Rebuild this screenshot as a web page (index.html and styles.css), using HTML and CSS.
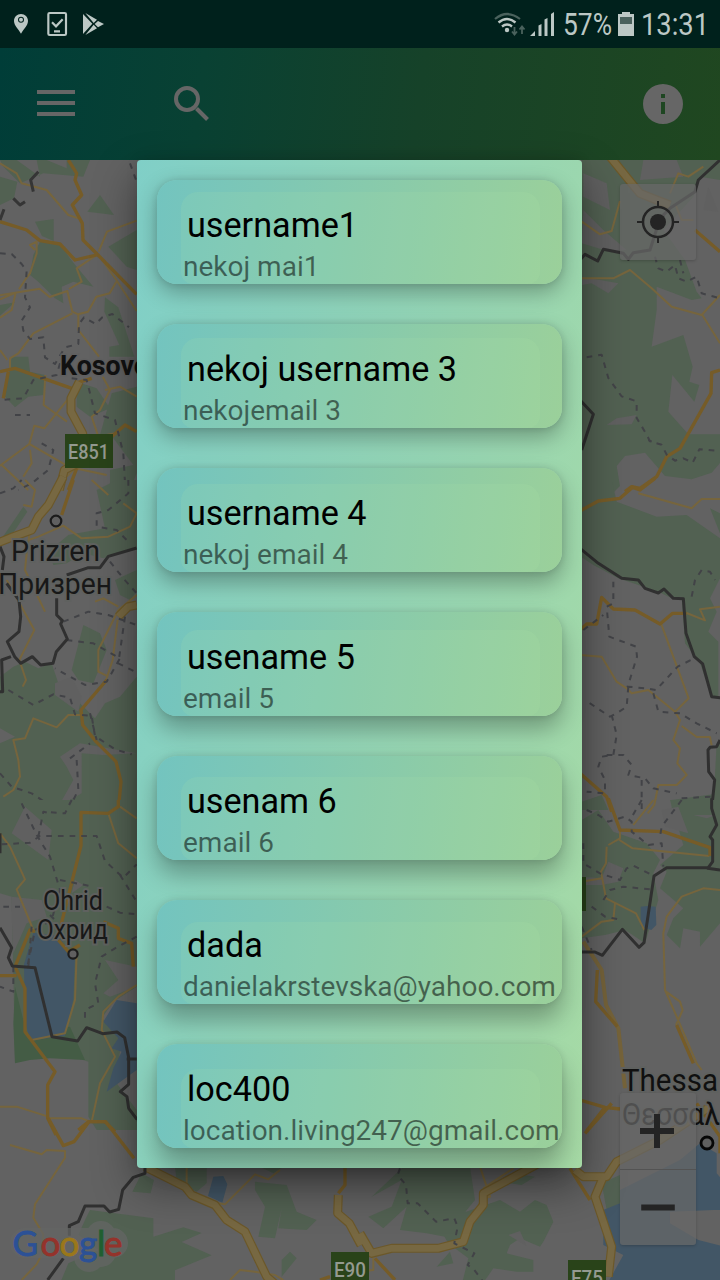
FILE: index.html
```html
<!DOCTYPE html>
<html lang="en">
<head>
<meta charset="utf-8">
<title>Users</title>
<link rel="stylesheet" href="styles.css">
</head>
<body>
<div class="screen">
  <header class="status">
    <svg class="status-icons" viewBox="0 0 1080 144" width="360" height="48">
      <path class="lit" fill-rule="evenodd" d="M63 42c-12 0-21 9-21 21 0 13 13 24 21 38 8-14 21-25 21-38 0-12-9-21-21-21zm0 8a9 9 0 1 1 0 18 9 9 0 0 1 0-18zm0 3a6 6 0 1 0 0 12 6 6 0 0 0 0-12z"/>
      <rect x="145" y="39" width="53" height="66" rx="4" fill="none" class="lit-line"/>
      <path class="lit-line" fill="none" d="M156 67l12 12 20-21M162 94h18"/>
      <path class="lit" d="M249 42l28 29-28 31zM256 39l35 20-10 10zM256 105l35-20-10-11zM294 63l18 9-18 10-10-10z"/>
    </svg>
    <svg class="status-info" viewBox="360 0 360 48" width="360" height="48">
      <path class="dim-line" d="M495 19q12-10 25 0"/>
      <path class="lit-arc" d="M498.500 22.500q8.500-7 17 0M502 26.500q5-4 10 0"/>
      <circle class="lit" cx="507" cy="30" r="2.200"/>
      <path class="dim-line thin" d="M514.500 27v7M512 31.500l2.500 3 2.500-3M522 34v-7M519.500 29.500l2.500-3 2.500 3"/>
      <path class="lit" d="M530 36l5-5v5zM538.500 25.500l3-1.500v12h-3zM544.500 19.500l3-1.500v18h-3zM551 14l3-2v24h-3z"/>
      <text class="clock" x="563" y="35" textLength="49" lengthAdjust="spacingAndGlyphs">57%</text>
      <path class="lit" d="M622 12h8v2h4v22h-16V14h4z"/>
      <path class="cell" d="M620 17h12v7h-12z"/>
      <text class="clock" x="641" y="35" textLength="68" lengthAdjust="spacingAndGlyphs">13:31</text>
    </svg>
  </header>

  <nav class="bar">
    <svg class="menu" viewBox="0 0 38 26" width="38" height="26"><path d="M0 0h38v4H0zM0 11h38v4H0zM0 22h38v4H0z"/></svg>
    <svg class="search" viewBox="0 0 36 36" width="36" height="36"><circle cx="13" cy="13" r="11"/><path d="M22.500 22.500l11 11"/></svg>
    <svg class="info" viewBox="0 0 40 40" width="40" height="40"><path fill-rule="evenodd" d="M20 0a20 20 0 1 0 0 40 20 20 0 0 0 0-40zm-2 10h4v4h-4zm0 8h4v12h-4z"/></svg>
  </nav>

  <main class="map">
    <svg class="tiles" viewBox="0 160 720 1120" width="720" height="1120">
      <g transform="translate(0 160) scale(.33333)">
        <path class="park" d="M0 0h50l70 50-10-50h30l60 25v-25h70l-20 50-120-10-70 30-50-50zM0 50l52 15-10 50-42 20zM300 105l42 60-80-10zM105 185l56-8v66l-35-15zM120 245l60 5 30 45 20 25 50 60-60-15-35 15 5 50-25-15-50-50-25-20 10-60zM325 260l85-50v120l-30-10zM0 435l45-8-45 40zM315 412l40 30 48 148h-75v-30l30-5-45-100zM35 590h50l5 45 45 10-5 60-45 5-40 32-30-32zM230 665l60 20 40 60-60 25-40-30zM335 700l75-20v260l-20 50h-60V930l70-15-60-80-40-10z"/>
        <path class="minor" d="M0 10l50 30 15 30 75 20 65 75 30 10M296 275l25-60 89-33M296 285l53 75 61 93M349 365l-20 35-40 10-25 45-30 8-17-8-15-62-53 18-30-25-120 20M0 418l47-20-12 52-35 23M217 460l-117 60-45 60-25 15v35M235 460v50l62 80M22 600L0 570M105 270l-15-15 20-10v35l-20 60-15 20-18 28M290 285l-60 40 15 40-38 22M136 645l-5 90 70 50M218 700l-85 105-30-8-15 55-88 65M5 915l80 75M85 850l130 75M90 870l5 40-25 40M308 650l22 40-30 60-25 20 20 60 50-10M315 690l45-10 50 30M200 950l25-25 95 20"/>
        <path class="road" d="M205 0l25 40-5 20 20 45-28 30 30 55 2 50 45 45 116 118M0 185l80 25 40 32 60 10 45 48 65-15M0 635l45-10 170 60M25 635l-15 80M335 830l40-35 35 20M230 925l-25 65M275 655l-50 15"/>
        <path class="highway-edge" d="M238 665l-25 50v40l35 65 5 80-60 30-15 60"/><path class="highway" d="M238 665l-25 50v40l35 65 5 80-60 30-15 60"/>
        <path class="dash" d="M0 280l35 2 30 30 15 20-5 80 15 30-25 40 5 30 20 25 40-5 5 60 30 20 30-50 40-10 2-60 15-20 35 20 20-20 30-10 50 40M180 610l-10 35-70 15-30 55-70 5M215 655l45 5 10 40 15 60 60 20 25 100 5 90M45 765h45M125 850l35 20-15 60-50 40-40 20M390 10l20 55"/>
        <path class="limit" d="M115 35l-23 25 8 35M40 115l20 20 15-10M12 148L0 180"/>
      </g>
      <g transform="translate(0 480) scale(.33333)">
        <path class="park" d="M290 30l60-30h60v200l-100 35-60-15-50 30-40 5-15-40 60-50 110-20zM70 80l12 15-50 75-30 10zM250 435l50 25 20 50-40 100-45-10-20-30zM345 300l65-30v65l-20 25-30-15zM0 590l40-30 35-15 40 20 40-15 20 60-5 35 60 15 55 55 30-45 45-20 50-60v410H0V790l45-20-45-25z"/>
        <path class="bare" d="M165 610l50-20 30 60-10 45-70-50zM180 830l60-40 170 30-100 5-65-5v120l-70 40 45-80-20-40z"/>
        <path class="minor" d="M85 180l30-10 75-33 55 38 80-5 65-30 20-40-40-30M90 150l-10 70-5 50 60 125M20 300l83 150-45 90 20 60-10 20M325 590l-30-15v-65l60-120 55-45M353 420l-15 120-20 60M285 365l25-10 45 25M250 705h-45l-35 37-70-27-25 60-35 5 15 60 5 50-20 40-30 20M275 0l50 45M75 0l30 30-10 50-25-5"/>
        <path class="road" d="M220 0l-35 105M320 600l-77 90 5 45 40 50 60 60 15 60-8 85"/>
        <path class="highway-edge" d="M190-10l-45 85-30 35-20 40-55 20-50 20M410 375l-25 5-30 30"/><path class="highway" d="M190-10l-45 85-30 35-20 40-55 20-50 20M410 375l-25 5-30 30"/>
        <path class="dash" d="M385 0v40l-60 50-35 10v40l60 10 35 35M330 245l40 50 40 45M190 425l75-30 60 10 85 30M375 410l-20 140 50 25M200 480l80 10 80 45-40 70-65 10-90-50M25 630l75 45 60-32 50 10 15 50 50 5 10 60 60 40 50 15M210 835l60-45M230 840l5 90-30 60M0 880l35 40 60 20 45 30M0 40l40-15 25-25M270 700l20 80"/>
        <path class="border" d="M410 204l-85 25-25 34h-35l-65 22M0 200l12 30-5 40M20 310l37 50 5 50-5 45-35 30 22 45 18 20 35-20 25 25 37-5 10-35 33-38-20-45 5-10-17-17v-50M33 530l-28 10 3 95H-5"/>
      </g>
      <g transform="translate(0 800) scale(.33333)">
        <path class="park" d="M0 0h410v560l-70 45-35 50 60 45-15 150 60 80v60H290l-25-40v-165l-90-30-130 30-5-260L35 290 0 280z"/>
        <path class="forest" d="M45 560l35 140 130-20 45 100-105-5-60 5-45 10-5-120z"/>
        <path class="bare" d="M75 20l80 70-10 90-110-80zM35 290l90 10 15 50-60 20-40 90-5-110zM225 240l25 15-35 25zM315 480l95 20v60l-80 30-20-10 45-40z"/>
        <path class="water" d="M100 398l80 10 30 60h15l-5 130-25 110-45 5-60 10-15-60-3-170zM350 600l60 10v200l-90 65 20-70 25-50-30-10 20-30-45-50z"/>
        <path class="minor" d="M0 100l30 40 45 98-25 30 50 122M325 40l30 90 55 45M410 555l-55 35-45 45-5 55 40 80-45 80-25 115M230 460l-5 140-30 100-100 20M145 955h100l25 10M0 920h50l95 30M360 20l50 35"/>
        <path class="road" d="M355 0v20l-30 20-82-3v100l-58 230 5 20M310 365l45 20v30l40 15 5 70M105 395l-15-5-45 110 30 65v130l90 120-22 40v100l25 50M0 527h50M235 990l30-25h50l30 30M175 420l30 35 35-20"/>
        <path class="dash" d="M65 10l45 95 40 65 30 100-25 90-50 30-25 120M5 133l85-5 30-20h170l25 75 55 50 40-40M215 0l-20 40-60-5M320 320l40 18 50 5M360 225l50 80M410 410l-65 35-40 25-20 80 10 60-40 20v40M10 320h50M150 345l20 20M40 500v75l-40-15M85 500l10-120M180 240l100 20M115 110l15-75 20 5"/>
        <path class="border" d="M0 100v60M0 383l35 60-10 30 12 25 68 5 51 207 77 13 27-40 48 18 43-5 23 17 12 60v80l-25 22 20 15 5 35 30 40M380 777h30"/>
      </g>
      <g transform="translate(0 1120) scale(.33333)">
        <path class="park" d="M270 270l190 25v55l90-28 55 17-60 27 90 40-110 45v39H180l25-60 90-40-60-45 20-45zM425 160l37 20-10 40-55-5zM525 140h95v50l-30 25-60-30zM370 0h40v30zM765 185l95 10 30 80 60 25-30 30-85-5 10-60-20 90-50-5 20-90-30-50zM870 395l20 20-45 55v-50zM780 140h70l-30 20zM1210 140h200l15 100-90 110-55-10-80-10 20-70-70 65-45-35 70-30 30-80-90 50zM1500 240l60 35 45-35 35 15 20 50-30 60-10 15-60-25-30 20-10 25 80 20v35l-50 0-70-10-35 50h-60l20-80-60-45-15-25 40-60z"/>
        <path class="park" d="M1310 440l40-45 10 35zM1505 180l40-20 60 10-40 25-65-10zM1805 190l55-25v85l-40 20z"/>
        <path class="bare" d="M1525 345l35-12 20 45z"/>
        <path class="water" d="M640 170l30-2 12 25-15 55-43-20zM1810 270l50-20v-40l180-90 60-50 50 30v60l50 60-30 50h-30l-130 5v35l85 50 80 20v-5l0 120H1820l50-90-60-30z"/>
        <path class="minor" d="M30 75l95 28 15-13 55 3v20l-90 140-5 40 30 50-5 60-15 30-45 47M840 150l-35 28-40-15-90 90-30-5M560 140v50M690 480l30-30 45 5 60 10 25 15M1440 140l30 90-25 5-45 110-20 20M1540 145l-90 60M1120 400v50l-45 5v30"/>
        <path class="road" d="M145-5l45 82 32-12 45-60h50l85 110M1035 145v50l-20 25M1125 415l60 65M1710 145l60 95M1755 40l80-90M960 480l30-10M2090-50l70 100 0 50"/>
        <path class="highway-edge" d="M435 140l120 60 20 25 70 30 35 45 55 35 65 135 35 30M1015 225l-2 55 35 30 35 65M1080 340l35 60 60-15h140l75-20 20-60 40-50v-35l185-100M1725 150l25 20h70l30-45 130-65 150-100M1810 170l-25 60 50 150-10 90"/><path class="highway" d="M435 140l120 60 20 25 70 30 35 45 55 35 65 135 35 30M1015 225l-2 55 35 30 35 65M1080 340l35 60 60-15h140l75-20 20-60 40-50v-35l185-100M1725 150l25 20h70l30-45 130-65 150-100M1810 170l-25 60 50 150-10 90"/>
        <path class="dash" d="M1200 145l-7 20 25 30 5 55h30l55 55 55-10 10 25-10 50 60 30-20 35 20 15 30 40"/>
        <path class="border" d="M435 140v20l-35 12-32 38-12 58-27 8-17-18h-57l-20 47-27 12v30M190 415l-47 65"/>
      </g>
      <g transform="translate(580 160) scale(.33333)">
        <path class="park" d="M5 0h415v60l-60-10-20 60-90 100 65 90 35 95 15 20-30 5-105-40v70l-15 110 95-35 28 95-10 45 30 10-15 50-66-80-12 110 60 68h100v80l-30 35-60 20-80-10-60-70-60 10-25 30 10 60-110 110L5 720z"/>
        <path class="bare" d="M10 40l70 30 10 80-80-40zM190 0h100l20 50-130 10zM5 350l110 20-30 30-50-30-30 5zM80 795l30-20 60-10-15 28zM10 150l60 60 70 60-50 5L5 250zM385 80l30 75-45-5z"/>
        <path class="minor" d="M0 355h100l50-25 65 55 60 55 90 25 55-60M367 465l53 85M5 185l55 38 35-10 25-90M270 100l25-60 30 10 45-30M285 130l20 50h35"/>
        <path class="road" d="M345 210l75 65M420 630l-25 8-2 62-93 165-40 25-30 60-50 35-25-5-20 15"/>
        <path class="highway-edge" d="M90-10l65 80 25 30 50 20 40 15"/><path class="highway" d="M90-10l65 80 25 30 50 20 40 15"/>
        <path class="dash" d="M225 290l10 35 25 10 25-20 10 40 25 10 30-15 15 50 55 15M300 300l10 40M20 592l45-8 20 70 40 55 45 15v50l30 50 10 20 35 10 15 30 25 18 25-7 28 13 20-40 60 5M205 840l10 5"/>
        <path class="border" d="M420 0l-65 60-10 35-75 50-30 30-30 95-50 8-15 20-15-18-60-12-17 35-38-20-15 17M0 720l40 43-35 107"/>
      </g>
      <g transform="translate(580 480) scale(.33333)">
        <path class="park" d="M5 0h90l15 65 120 45 90-5 100 70v120l-30 60 20 40-25 60 30 30v170l-20-5-35-100-45-60-10-140-30 5-40-20-120-40-75-40-60-40-35-30zM390 85l30 15v60zM275 960l145-20v50H275zM410 790l10-5v205l-20-10zM5 965l60-20 20 45H5z"/>
        <path class="minor" d="M175 40l160 45 30-28h55M0 525l65 5 45 75 30 20 15 15 50-10 80 65 15 25-20 60 20 25-8 45 28 35-30 30h-55l-12 60-20 25M243 430l83 225-40 40M305 738l45 33h40l5 25M420 380l-60 8 15 33-55-22"/>
        <path class="road" d="M0 93l55-30 65-8 38-33 22 8 45-35M0 450l20-18h30l15-80 35 35 65 3 75 42 38-32h42M0 880l80 70 15 45"/>
        <path class="dash" d="M100 305v65l-20 10 8 90 80 30 3 30-28 90 55 5 30 5 65-70 50-25M145 620l-5 60-30 20-20 10-75-50M95 705l15 60-10 60-35 5-10 30 20 40v40l-55-5M80 825h50l25 30-10 30 50 10 25 30 70 15M185 900v90M220 640l15 55 65 5 50 30 60 30M300 985v-30l95-5M10 450l60-45M335 350l10-50 20-30 25 5 15 25"/>
        <path class="border" d="M0 205l55 45 70 45 50 5 20 25 40 14 17-12 28 28 30 1 8 104 25 70 25 22 27 98 35 5M420 780l-10 20-20 2-6 8 2 65 18 25-10 95"/>
      </g>
      <g transform="translate(580 800) scale(.33333)">
        <path class="park" d="M5 60l50-30 45 65 100 35 40 50-20 40 15 80-40 130-60-40-60 15-70 10zM270 0h150v370l-60 70v-45l-50-10-10 60-40-40 20-50 30-30-70-60 20-50-20-20 70-60z"/>
        <path class="bare" d="M5 230l60 5 20-50 45 20-15 40-50 10H5zM340 45h70l-30 10zM245 30l50-10 30 80-70-20z"/>
        <path class="water" d="M182 320l20-2 25 2 2 55-15 15-32-10z"/>
        <path class="minor" d="M220 0l-60 75M118 120l40 25 230 23M85 135l35-20v-30M80 140l-2 50-15 25 15 80 90 45 25 50M5 245l60-10M105 310l-5 50-35 5-60 45M420 270l-50-5-65 25-45 60-10 50 5 170 35 80 60 140 15 20M258 575l42 30 8 25-20 45"/>
        <path class="road" d="M85-5l35 95 130 5 140 48v25M0 900l75 22 45 5M75 922l-55 70"/>
        <path class="gold" d="M10 425l55 85 13 105 37 70 20 180"/>
        <path class="road" d="M52 510l-5 95 65 75M290 675l50 115"/>
        <path class="dash" d="M20 30l35 15 30 20 50-15 20 15v30l50 40 40-5 5 70M185 0l-35 60M305 0l-60 80-5 30M10 130v60l50 30 60 20 20-35 20-8 50 25M70 300l20-30 40-10 80 8M35 320l40 30 50 10M5 380l30 70"/>
        <path class="border" d="M395-5v30l15 50-20 35 8 10v65l-15 20 37 5M383 203H260l-38 25-30 200-15 14-50-54-60 78-22-10H0"/>
      </g>
      <rect class="shield" x="65" y="434" width="48" height="34"/><rect class="shield" x="331" y="1252" width="38" height="28"/><rect class="shield" x="568" y="1260" width="38" height="20"/><rect class="shield" x="560" y="877" width="26" height="34"/>
      <text class="code" x="68" y="459" textLength="41" lengthAdjust="spacingAndGlyphs">E851</text>
      <text class="code" x="334" y="1277" textLength="32" lengthAdjust="spacingAndGlyphs">E90</text>
      <text class="code" x="571" y="1285" textLength="32" lengthAdjust="spacingAndGlyphs">E75</text>
      <text class="country" x="60" y="375" textLength="89" lengthAdjust="spacingAndGlyphs">Kosovo</text>
      <g class="city">
        <text x="11" y="561" textLength="89" lengthAdjust="spacingAndGlyphs">Prizren</text>
        <text x="-2" y="594" textLength="114" lengthAdjust="spacingAndGlyphs">Призрен</text>
        <text class="small" x="43" y="910" textLength="60" lengthAdjust="spacingAndGlyphs">Ohrid</text>
        <text class="small" x="37" y="939" textLength="71" lengthAdjust="spacingAndGlyphs">Охрид</text>
        <text class="large" x="622" y="1091" textLength="96" lengthAdjust="spacingAndGlyphs">Thessa</text>
        <text class="large" x="622" y="1125" textLength="98" lengthAdjust="spacingAndGlyphs">Θεσσαλ</text>
      </g>
      <circle class="dot" cx="56" cy="521" r="5.300"/><circle class="dot" cx="73" cy="954" r="4.600"/><circle class="dot strong" cx="707" cy="1143" r="6"/>
      <path class="halo" d="M25 1243h88M89 1251v6M101 1236v16"/>
      <text class="google" y="1256"><tspan class="g-blue" x="12.500">G</tspan><tspan class="g-red" x="40.500">o</tspan><tspan class="g-yellow" x="59.500">o</tspan><tspan class="g-blue" x="79">g</tspan><tspan class="g-green" x="97">l</tspan><tspan class="g-red" x="104">e</tspan></text>
    </svg>
    <div class="controls">
      <div class="control locate"><svg viewBox="0 0 42 42" width="42" height="42"><circle class="ring" cx="21" cy="21" r="15"/><circle cx="21" cy="21" r="8"/><path d="M20 0h2v7h-2zM20 35h2v7h-2zM0 20h7v2H0zM35 20h7v2h-7z"/></svg></div>
      <div class="control zoom">
        <svg viewBox="0 0 76 76" width="76" height="76"><path d="M20 35h14V21h6v14h14v6H40v14h-6V41H20z"/></svg>
        <svg class="minus" viewBox="0 0 76 76" width="76" height="76"><path d="M21 35h34v6H21z"/></svg>
      </div>
    </div>
  </main>

  <div class="overlay">
    <section class="dialog">
      <article class="card c1"><h2>username1</h2><p>nekoj mai1</p></article>
      <article class="card c2"><h2>nekoj username 3</h2><p>nekojemail 3</p></article>
      <article class="card c3"><h2>username 4</h2><p>nekoj email 4</p></article>
      <article class="card c4"><h2>usename 5</h2><p>email 5</p></article>
      <article class="card c5"><h2>usenam 6</h2><p>email 6</p></article>
      <article class="card c6"><h2>dada</h2><p>danielakrstevska@yahoo.com</p></article>
      <article class="card c7"><h2>loc400</h2><p>location.living247@gmail.com</p></article>
    </section>
  </div>
</div>
</body>
</html>
```
FILE: styles.css
```css
* { box-sizing: border-box; }
body { margin: 0; font-family: Roboto, "Noto Sans", sans-serif; }
svg { display: block; }

.screen { position: relative; width: 720px; height: 1280px; display: flex; flex-direction: column; overflow: hidden; background: #5f5f5f; }

.status { display: flex; height: 48px; background: #00211c; }
.lit { fill: #bcc8c5; }
.lit-line { stroke: #bcc8c5; stroke-width: 6.5; }
.lit-arc { fill: none; stroke: #bcc8c5; stroke-width: 2.4; }
.dim-line { fill: none; stroke: #4a625d; stroke-width: 2.2; }
.dim-line.thin { stroke-width: 1.8; }
.cell { fill: #4a625d; }
.clock { font-size: 31px; fill: #bcc8c5; }

.bar { display: flex; align-items: center; height: 112px; padding: 0 37px; background: linear-gradient(97deg, #003d38 0%, #094133 28%, #164229 58%, #204720 100%); }
.menu { fill: #666; margin-top: -2px; }
.search { margin-left: 99px; fill: none; stroke: #666; stroke-width: 4; }
.info { margin-left: auto; fill: #666; }

.map { position: relative; height: 1120px; background: #626262; }
.park { fill: #526152; }
.forest { fill: #445c45; }
.bare { fill: #606060; }
.water { fill: #425666; }
.minor, .road, .gold, .highway, .highway-edge, .dash, .border, .limit, .halo { fill: none; stroke-linejoin: round; }
.minor { stroke: #76653d; stroke-width: 6; }
.road { stroke: #765c28; stroke-width: 10; }
.gold { stroke: #75633a; stroke-width: 12; }
.highway-edge { stroke: #6c5829; stroke-width: 27; }
.highway { stroke: #776842; stroke-width: 20; }
.dash { stroke: #424347; stroke-width: 6; stroke-dasharray: 17 18; }
.border { stroke: #303030; stroke-width: 9; }
.limit { stroke: #353535; stroke-width: 9; }
.shield { fill: #294319; }
.code { font-size: 20px; font-weight: 500; fill: #949a90; }
.country { font-size: 28px; font-weight: 700; fill: #111; stroke: #5f5f5f; stroke-width: 3px; paint-order: stroke; }
.city { font-size: 30px; fill: #181818; stroke: #5f615f; stroke-width: 4px; paint-order: stroke; }
.city .small { font-size: 27px; }
.city .large { font-size: 32px; fill: #101010; }
.dot { fill: #606060; stroke: #1c1c1c; stroke-width: 2.2; }
.dot.strong { stroke: #070707; stroke-width: 2.8; }
.halo { stroke: #646664; stroke-width: 30; stroke-linecap: round; opacity: .75; }
.google { font-family: Lato, sans-serif; font-size: 35px; stroke-width: .9px; }
.g-blue { fill: #2c5196; stroke: #2c5196; }
.g-red { fill: #94332b; stroke: #94332b; }
.g-yellow { fill: #9a771a; stroke: #9a771a; }
.g-green { fill: #1f5f30; stroke: #1f5f30; }

.controls { position: absolute; inset: 24px 24px 35px auto; display: flex; flex-direction: column; justify-content: space-between; }
.control { width: 76px; background: rgba(104, 104, 104, .72); border-radius: 3px; box-shadow: 0 1px 3px rgba(0, 0, 0, .2); fill: #242424; }
.locate { height: 76px; display: grid; place-items: center; }
.ring { fill: none; stroke: #242424; stroke-width: 2.5; }
.zoom { height: 152px; }
.zoom .minus { border-top: 1px solid #535353; }

.overlay { position: absolute; inset: 48px 0 0; display: flex; justify-content: center; align-items: center; padding-right: 1px; }
.dialog { width: 445px; height: 1008px; padding: 20px; display: flex; flex-direction: column; gap: 40px; border-radius: 4px; background: linear-gradient(100deg, #80cfc7, #a6daa5); box-shadow: 0 18px 44px rgba(0, 0, 0, .42), 0 0 12px rgba(0, 0, 0, .1); }
.card { --inset: 12px; --drop: 8px; --blur: 22px; position: relative; height: 104px; padding: 24px 0 0 26px; border-radius: 20px; background: linear-gradient(97deg, #73c4bf, #9bd09a); box-shadow: 0 var(--drop) var(--blur) rgba(0, 0, 0, .29), 0 0 7px rgba(0, 0, 0, .12); white-space: nowrap; }
.card::before { content: ""; position: absolute; inset: var(--inset) 22px 0 24px; border-radius: 17px 17px 12px 12px; background: rgba(180, 235, 170, .13); }
.c2 { --inset: 14px; --drop: 9px; }
.c3 { --inset: 16px; --drop: 11px; }
.c4 { --inset: 18px; --drop: 13px; --blur: 23px; }
.c5 { --inset: 21px; --drop: 14px; --blur: 24px; }
.c6 { --inset: 22px; --drop: 16px; --blur: 25px; }
.c7 { --inset: 25px; --drop: 18px; --blur: 26px; }
.card h2, .card p { position: relative; margin: 0; font-weight: 400; }
.card h2 { padding-left: 4px; font-size: 34.2px; line-height: 42px; color: #000; }
.card p { margin-top: 4px; font-size: 28px; line-height: 33px; color: rgba(0, 0, 0, .53); }
```
